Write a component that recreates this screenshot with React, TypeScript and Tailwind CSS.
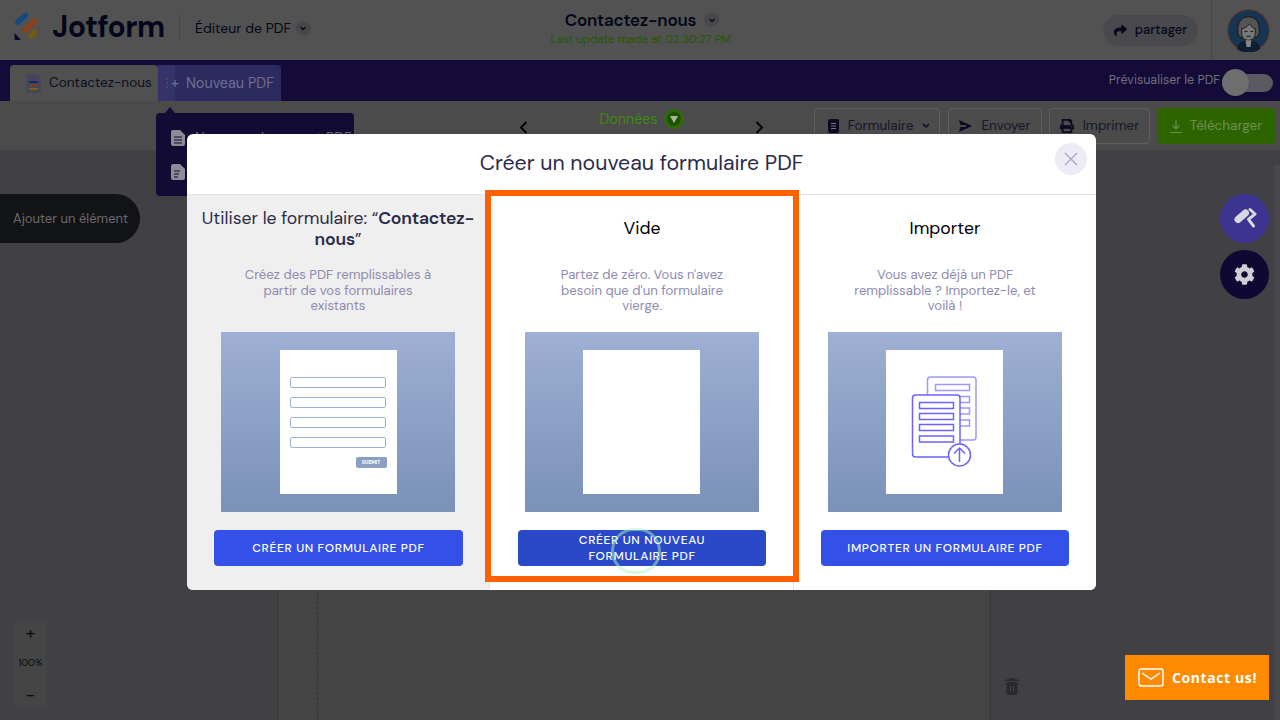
import React from "react";
import { FaCog, FaPrint, FaShare } from "react-icons/fa";

const dm = '"DM Sans", Inter, "Noto Sans", sans-serif';

function Logo() {
  return (
    <svg width="28" height="30" viewBox="0 0 28 30" className="shrink-0 relative z-30" fill="none" strokeLinecap="round" strokeWidth="5.500">
      <path d="M5 10l7.500-6.500" stroke="#124a80" />
      <path d="M12 18l10-9" stroke="#8a411a" />
      <path d="M18 24l4-4" stroke="#75590f" />
      <path d="M1.500 21l6.500 7H2.500a1 1 0 0 1-1-1z" fill="#0a0a2c" strokeWidth="0" />
    </svg>
  );
}

function Chevron() {
  return (
    <span className="w-[15px] h-[15px] rounded-full bg-[#e0e0ea] flex items-center justify-center shrink-0">
      <svg width="8" height="8" viewBox="0 0 8 8" fill="none" stroke="#0a1551" strokeWidth="1.300"><path d="M1.500 3l2.500 2.500L6.500 3" /></svg>
    </span>
  );
}

function Toolbtn({ children, w }: { children: React.ReactNode; w: string }) {
  return (
    <div className={`relative z-30 h-9 ${w} rounded border border-[#5f5f5f] flex items-center justify-center gap-[9px] text-[13.5px] text-[#15152b] shrink-0`}>
      {children}
    </div>
  );
}

function FormThumb() {
  return (
    <div className="ml-px w-[117px] h-[144px] bg-white flex flex-col items-center pt-[27px] pr-[2px]">
      {[0, 1, 2, 3].map((i) => (
        <div key={i} className="w-[96px] h-[11px] rounded-[2px] border border-[#9db0d0] mb-[9px]" />
      ))}
      <div className="w-[96px] flex justify-end">
        <div className="w-[31px] h-[11px] -mr-px rounded-[2px] bg-[#8ba0c0] text-[5px] text-white font-bold flex items-center justify-center">SUBMIT</div>
      </div>
    </div>
  );
}

function ImportThumb() {
  return (
    <div className="mr-[2px] w-[117px] h-[144px] bg-white flex items-center justify-center">
      <svg width="66" height="92" viewBox="0 0 66 92" fill="none" stroke="#6c63ff" strokeWidth="1.500">
        <g opacity=".65">
          <rect x="16.500" y="1" width="48.500" height="63" rx="3" fill="#fff" />
          <rect x="24.500" y="8.500" width="34" height="6" />
          <rect x="24.500" y="20.500" width="34" height="6" />
          <rect x="24.500" y="32" width="34" height="6" />
          <rect x="24.500" y="44" width="34" height="6" />
        </g>
        <rect x="1.500" y="19" width="47.500" height="62" rx="3" fill="#fff" />
        <rect x="8.500" y="26.500" width="34" height="6" />
        <rect x="8.500" y="37.500" width="34" height="6" />
        <rect x="8.500" y="48.500" width="34" height="6" />
        <rect x="8.500" y="60" width="34" height="6" />
        <circle cx="48.500" cy="79" r="11" fill="#fff" />
        <path d="M48.500 86V72M43 77.500L48.500 72l5.500 5.500" />
      </svg>
    </div>
  );
}

function Column({
  title, desc, cta, thumb, bg, pressed, btn,
}: {
  title: React.ReactNode; desc: string; cta: string; thumb: React.ReactNode; bg: string; pressed?: boolean; btn: string;
}) {
  return (
    <div className={`flex-1 min-w-0 ${bg} flex flex-col items-center pt-[12px] border-r border-[#e3e3e3] last:border-r-0 ${pressed ? "pl-px" : ""}`}>
      <div className="h-[42px] w-[296px] flex items-center justify-center text-center text-[17.6px] leading-[21px]">{title}</div>
      <p className="w-[190px] h-[47px] mt-[18px] text-center text-[13.2px] leading-[15.5px] text-[#8f8bb0]">{desc}</p>
      <div className="mt-[18px] w-[234px] h-[180px] shrink-0 bg-gradient-to-b from-[#9eb0d3] to-[#7a91b8] flex items-center justify-center">{thumb}</div>
      <button className={`relative mt-[18px] ${btn} h-[36px] shrink-0 rounded text-white text-[12px] leading-[16px] font-medium tracking-[0.65px] px-[20px] ${pressed ? "bg-[#2a49c9]" : "bg-[#3350e8]"}`}>
        {cta}
        {pressed && <span className="absolute left-[93px] top-[-2px] w-[50px] h-[46px] rounded-full border-[3px] border-[#a8f5b8]/50" />}
      </button>
    </div>
  );
}

export default function App() {
  return (
    <div className="relative w-[1280px] h-[720px] overflow-hidden bg-[#c8c8d7] flex flex-col" style={{ fontFamily: dm }}>
      <header className="h-[60px] bg-white flex items-center shrink-0">
        <div className="pl-[13px] pr-[15px] flex items-center gap-[11px] border-r border-[#ddd] h-[26px] mb-[6px]">
          <Logo />
          <span className="text-[30px] font-bold leading-none tracking-[-0.5px] text-[#0a1551] w-[112px]">Jotform</span>
        </div>
        <div className="ml-[15px] mb-[4px] flex items-center gap-[5px] text-[14px] text-[#0a1551] w-[317px]">
          Éditeur de PDF
          <Chevron />
        </div>
        <div className="w-[260px] flex flex-col items-center pb-[6px]">
          <div className="flex items-center gap-[8px] text-[17px] tracking-[-0.2px] font-semibold leading-[22px] text-[#0a1551]">
            Contactez-nous
            <Chevron />
          </div>
          <div className="relative z-30 mt-px text-[11.6px] leading-[14px] text-[#245800]">Last update made at 02:30:27 PM.</div>
        </div>
        <div className="flex-1 flex justify-end items-center h-full">
          <div className="h-[31px] w-[95px] mr-[13px] rounded-full bg-[#e4e4ee] flex items-center justify-center gap-[8px] text-[13px] font-medium text-[#0a1551]">
            <FaShare size={13} color="#0a1551" />
            partager
          </div>
          <div className="w-[69px] h-full border-l border-[#ddd] flex items-center justify-center pl-[4px]">
            <svg width="43" height="43" viewBox="0 0 44 44" className="relative z-30">
              <circle cx="22" cy="22" r="21.500" fill="#173550" stroke="#7a3a1c" />
              <path d="M10 41c1-7 7-9 12-9s11 2 12 9a21 21 0 0 1-24 0z" fill="#0f1f30" />
              <path d="M11 24c-1-12 5-16 11-16s12 4 11 16c0 3-2 5-4 5H15c-2 0-4-2-4-5z" fill="#555" stroke="#111" />
              <path d="M15 20c3 0 6-2 8-5 2 3 4 5 6 5v5c0 4-3 7-7 7s-7-3-7-7z" fill="#777" stroke="#111" strokeWidth=".8" />
              <path d="M18 23h3M24 23h3M20 28h4" stroke="#111" strokeWidth=".9" />
              <path d="M19 32h6l-1 7h-4z" fill="#888" />
            </svg>
          </div>
        </div>
      </header>

      <div className="relative z-30 h-[41px] bg-[#140b38] flex shrink-0 pl-[10px] pt-[5px]">
        <div className="w-[148px] h-[36px] rounded-t bg-[#505050] flex items-center pl-[16px] pt-px gap-[8px] text-[13.6px] text-[#0d0d20]">
          <svg width="15" height="19" viewBox="0 0 15 19">
            <path d="M2 0h9l4 4v13a2 2 0 0 1-2 2H2a2 2 0 0 1-2-2V2a2 2 0 0 1 2-2z" fill="#45465a" />
            <rect x="3" y="7" width="9" height="2" fill="#16257a" />
            <rect x="3" y="10.500" width="9" height="2" fill="#8a3a10" />
            <rect x="3" y="14" width="9" height="2" fill="#7d5f10" />
          </svg>
          Contactez-nous
        </div>
        <div className="w-[17px] h-[36px] bg-[#35336a] flex flex-col items-center justify-center gap-[2px]">
          <span className="w-[2px] h-[2px] bg-[#45437a]" /><span className="w-[2px] h-[2px] bg-[#45437a]" /><span className="w-[2px] h-[2px] bg-[#45437a]" />
        </div>
        <div className="w-[106px] h-[36px] rounded-tr bg-[#2d2a5f] flex items-center pt-px text-[14.4px] text-[#6f6f90]">
          <span className="-ml-[4px] whitespace-nowrap">+<span className="ml-[7px]">Nouveau PDF</span></span>
        </div>
        <div className="flex-1 flex justify-end items-center pb-[5px] pr-[7px] text-[12.5px] text-[#6f6f7a]">
          Prévisualiser le PDF
          <span className="relative ml-[2px] mt-[5px] w-[51px] h-[18px] rounded-full bg-[#5a5a62]">
            <span className="absolute left-0 top-[-5px] w-[27px] h-[27px] rounded-full bg-[#6e6e6e] shadow" />
          </span>
        </div>
      </div>

      <div className="h-[49px] bg-[#eaeaea] border-b border-[#e2e2e2] shrink-0 flex items-start pt-[7px] pr-[5px] justify-end">
        <div className="mr-[50px] w-[245px] flex items-start justify-between">
          <svg className="mt-[13px]" width="9" height="13" viewBox="0 0 9 13" fill="none" stroke="#0c0c14" strokeWidth="2"><path d="M7.500 1L2 6.500 7.500 12" /></svg>
          <span className="relative z-30 text-[14.3px] leading-[18px] mt-[1px] text-[#3f8a10] flex items-center gap-[6px]">
            Données
            <span className="w-[20px] h-[20px] rounded-full bg-[#1f5200] border-[3px] border-[#2f6a0a] flex items-center justify-center">
              <svg width="8" height="7" viewBox="0 0 8 7" fill="#aab8a0"><path d="M0 0h8L4 7z" /></svg>
            </span>
          </span>
          <svg className="mt-[13px]" width="9" height="13" viewBox="0 0 9 13" fill="none" stroke="#0c0c14" strokeWidth="2"><path d="M1.500 1L7 6.500 1.500 12" /></svg>
        </div>
        <Toolbtn w="w-[126px] mr-[8px] pl-[4px]">
          <svg width="11" height="14" viewBox="0 0 11 14"><rect width="11" height="14" rx="2" fill="#0a0a20" /><path d="M3 4.500h5M3 7h5M3 9.500h5" stroke="#777" strokeWidth="1" /></svg>
          Formulaire
          <svg width="8" height="6" viewBox="0 0 8 6" fill="none" stroke="#0a0a20" strokeWidth="1.500"><path d="M1 1l3 3 3-3" /></svg>
        </Toolbtn>
        <Toolbtn w="w-[94px] mr-[7px]">
          <svg width="13" height="12" viewBox="0 0 13 12" fill="#0a0a20"><path d="M0 0l13 6L0 12l1.500-5H7V5H1.500z" /></svg>
          Envoyer
        </Toolbtn>
        <Toolbtn w="w-[101px] mr-[7px]">
          <FaPrint size={14} color="#0a0a20" />
          Imprimer
        </Toolbtn>
        <div className="relative z-30 w-[118px] h-9 rounded bg-[#2d6400] text-[#6d9050] text-[13.5px] flex items-center justify-center gap-[8px] shrink-0">
          <svg width="12" height="13" viewBox="0 0 12 13" fill="none" stroke="#6d9050" strokeWidth="1.200"><path d="M6 0v9M2.500 5.500L6 9l3.500-3.500M0 12.500h12" /></svg>
          Télécharger
        </div>
      </div>

      <main className="flex-1 flex">
        <aside className="w-[278px] border-r border-[#a9a9a9] flex flex-col pl-[14px]">
          <div className="flex-1" />
          <div className="w-[33px] h-[88px] mb-[12px] bg-[#d6d6d9] rounded flex flex-col items-center justify-between pt-[4px] pb-[4px] text-[#222] text-[10px]">
            <span className="text-[18px] leading-[18px]">+</span>
            <span className="mb-[4px]">100%</span>
            <span className="text-[18px] leading-[18px]">−</span>
          </div>
        </aside>
        <div className="w-[39px] bg-[#d4d4d4]" />
        <div className="flex-1 bg-[#d4d4d4] border-l border-dashed border-[#9f9f9f]" />
        <aside className="w-[290px] border-l border-[#a9a9a9] pr-[6px]" />
      </main>

      <div className="absolute left-0 top-[194px] w-[140px] h-[49px] rounded-r-full bg-[#121315] flex items-center pl-[13px] text-[13px] text-[#6b6b6d] z-30">Ajouter un élément</div>

      <div className="absolute left-[156px] top-[113px] w-[198px] h-[83px] rounded bg-[#120b33] z-30 flex flex-col pl-[15px] pt-[14px] gap-[16px] text-[14px] text-[#6a6a7a]">
        <span className="absolute left-[9px] top-[-6px] w-0 h-0 border-x-[5px] border-x-transparent border-b-[6px] border-b-[#120b33]" />
        <div className="flex items-center gap-[10px]">
          <svg width="14" height="16" viewBox="0 0 14 16"><path d="M2 0h7l5 5v9a2 2 0 0 1-2 2H2a2 2 0 0 1-2-2V2a2 2 0 0 1 2-2z" fill="#8c8c98" /><path d="M3 7h8M3 10h8M3 13h8" stroke="#120b33" strokeWidth="1.200" /></svg>
          Nouveau document PDF
        </div>
        <svg width="14" height="16" viewBox="0 0 14 16"><path d="M2 0h7l5 5v9a2 2 0 0 1-2 2H2a2 2 0 0 1-2-2V2a2 2 0 0 1 2-2z" fill="#8c8c98" /><path d="M3 7h6M3 10h5M3 13h4" stroke="#120b33" strokeWidth="1.200" /></svg>
      </div>

      <div className="absolute inset-0 bg-black/[.68] z-20" />

      <div className="absolute right-[11px] top-[194px] w-[49px] h-[49px] rounded-full bg-[#3d3390] z-30 flex items-center justify-center">
        <svg width="24" height="24" viewBox="0 0 24 24" fill="none" stroke="#d8d8e0" strokeLinecap="round" strokeLinejoin="round">
          <path d="M5 12.500L12.500 6" strokeWidth="7" />
          <path d="M17 2.500L22 7l-6.500 5.300 5 6.700" strokeWidth="3" />
        </svg>
      </div>
      <div className="absolute right-[11px] top-[250px] w-[49px] h-[49px] rounded-full bg-[#0f0833] z-30 flex items-center justify-center">
        <FaCog size={21} color="#cfcfd6" />
      </div>

      <div className="absolute right-0 top-[165px] bottom-0 w-[6px] bg-[#47474c] z-30" />

      <div className="absolute left-[187px] top-[134px] w-[909px] h-[456px] bg-white rounded-md z-40 flex flex-col text-[#0a1551] overflow-hidden">
        <div className="relative h-[61px] shrink-0 border-b border-[#e3e3e3] flex items-center justify-center text-[21.3px] text-[#2b2b4a]">
          Créer un nouveau formulaire PDF
          <span className="absolute right-[9px] top-[9px] w-[32px] h-[32px] rounded-full bg-[#ecebf6] flex items-center justify-center">
            <svg width="14" height="14" viewBox="0 0 14 14" stroke="#a9a5cc" strokeWidth="1.300"><path d="M1 1l12 12M13 1L1 13" /></svg>
          </span>
        </div>
        <div className="flex-1 flex">
          <Column
            bg="bg-[#efefef]"
            btn="w-[249px] ml-px"
            title={<span className="text-[#2b2b4a] block w-[278px] mt-[2px]">Utiliser le formulaire: “<b className="font-semibold tracking-[-0.2px]">Contactez-nous</b>”</span>}
            desc="Créez des PDF remplissables à partir de vos formulaires existants"
            cta="CRÉER UN FORMULAIRE PDF"
            thumb={<FormThumb />}
          />
          <Column
            bg="bg-white"
            btn="w-[248px]"
            title={<span className="text-black">Vide</span>}
            desc="Partez de zéro. Vous n'avez besoin que d'un formulaire vierge."
            cta="CRÉER UN NOUVEAU FORMULAIRE PDF"
            thumb={<div className="mr-[2px] w-[117px] h-[144px] bg-white" />}
            pressed
          />
          <Column
            bg="bg-white"
            btn="w-[248px]"
            title={<span className="text-black">Importer</span>}
            desc="Vous avez déjà un PDF remplissable ? Importez-le, et voilà !"
            cta="IMPORTER UN FORMULAIRE PDF"
            thumb={<ImportThumb />}
          />
        </div>
      </div>

      <div className="absolute left-[485px] top-[190px] w-[314px] h-[392px] border-[6px] border-[#ff6100] z-50" />

      <div className="absolute left-[1125px] top-[655px] w-[144px] h-[45px] bg-[#ff8a00] z-50 flex items-center pl-[13px] gap-[8px] text-white text-[14px] font-bold tracking-[0.6px]" style={{ fontFamily: '"Open Sans", sans-serif' }}>
        <svg width="26" height="20" viewBox="0 0 26 20" fill="none" stroke="#fff" strokeWidth="1.500"><rect x="1" y="1" width="24" height="17" rx="2.500" /><path d="M4 5l9 6 9-6" /></svg>
        Contact us!
      </div>
      <svg className="absolute left-[1005px] top-[678px] z-30" width="14" height="17" viewBox="0 0 14 17" fill="#2a2a2e"><path d="M0 1.500h14V3H0zM4 0h6v1.500H4zM1.500 4h11v11.500a1.500 1.500 0 0 1-1.500 1.500H3a1.500 1.500 0 0 1-1.500-1.500z" /><path d="M5.500 8v5M8.500 8v5" stroke="#45454a" strokeWidth="1" /></svg>
    </div>
  );
}
